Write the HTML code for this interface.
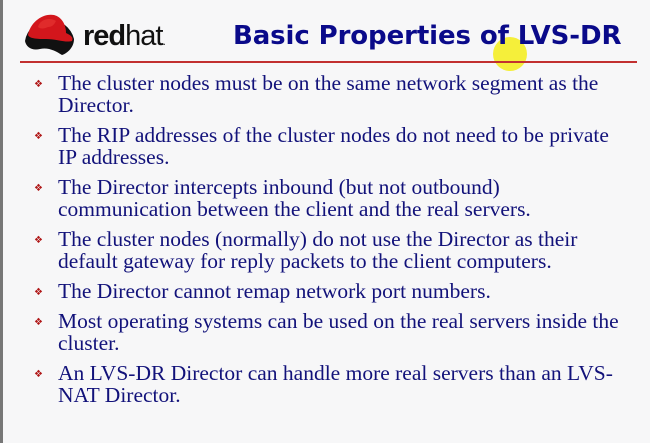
<!DOCTYPE html>
<html><head><meta charset="utf-8"><style>
body{margin:0;width:650px;height:443px;background:#f7f7f8;position:relative;overflow:hidden;font-family:"Liberation Serif",serif}
.lb{position:absolute;left:0;top:0;width:3px;height:443px;background:#777}
.rh{position:absolute;left:83px;top:20px;font-family:"Liberation Sans",sans-serif;font-size:29px;color:#111;letter-spacing:-1px}
.title{position:absolute;left:233px;top:21px;font-family:"DejaVu Sans",sans-serif;font-weight:bold;font-size:26px;color:#0a0a8a;letter-spacing:-0.1px}
.line{position:absolute;left:20px;top:61px;width:617px;height:2px;background:#c23030}
ul{position:absolute;left:34px;top:72px;margin:0;padding:0;list-style:none;width:590px}
li{position:relative;padding-left:24px;font-size:21.5px;line-height:22px;color:#12127a;margin-bottom:8px}
li:before{content:"❖";position:absolute;left:0;top:2px;font-size:10px;color:#b01818;font-family:"DejaVu Sans",sans-serif}
.cur{position:absolute;left:493px;top:37px;width:34px;height:34px;border-radius:50%;background:#f5ef3a}
</style></head><body>
<div class="lb"></div>
<svg style="position:absolute;left:22px;top:11px" width="56" height="46" viewBox="0 0 56 46">
<path d="M3 30 A25 25 0 0 1 52 28 C52 36 46 42 40 44 C34 40 26 36 18 38 C10 40 4 36 3 30Z" fill="#111"/>
<path d="M6 24 C8 12 20 2 32 4 C40 6 44 14 44 22 C48 24 52 26 50 30 C44 32 34 28 24 28 C16 28 8 28 6 24Z" fill="#d3161c"/>
<path d="M16 16 C18 8 28 6 34 10 C32 14 30 16 26 16 C22 18 18 18 16 16Z" fill="#e02b2b"/>
</svg>
<div class="rh"><b>red</b>hat<span style="font-size:12px">.</span></div>
<div class="cur"></div>
<div class="title">Basic Properties of LVS-DR</div>
<div class="line"></div>
<ul>
<li>The cluster nodes must be on the same network segment as the Director.</li>
<li>The RIP addresses of the cluster nodes do not need to be private IP addresses.</li>
<li>The Director intercepts inbound (but not outbound) communication between the client and the real servers.</li>
<li>The cluster nodes (normally) do not use the Director as their default gateway for reply packets to the client computers.</li>
<li>The Director cannot remap network port numbers.</li>
<li>Most operating systems can be used on the real servers inside the cluster.</li>
<li>An LVS-DR Director can handle more real servers than an LVS-NAT Director.</li>
</ul>
</body></html>
